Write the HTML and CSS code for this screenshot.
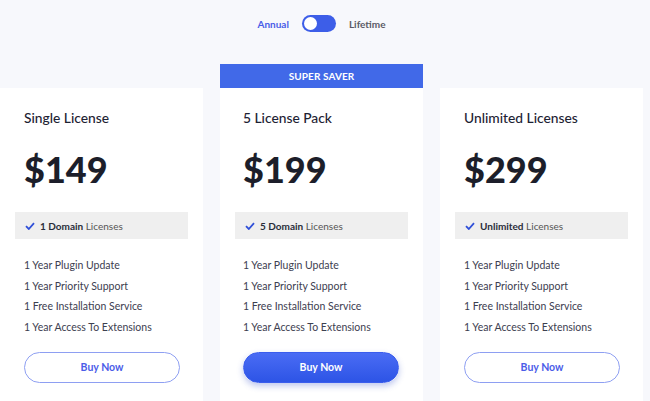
FILE: index.html
```html
<!DOCTYPE html>
<html>
<head>
<meta charset="utf-8">
<link rel="stylesheet" href="styles.css">
</head>
<body>
<div class="page">
  <div class="switcher">
    <span class="sw-label active">Annual</span>
    <span class="toggle"><span class="knob"></span></span>
    <span class="sw-label">Lifetime</span>
  </div>
  <div class="plans">
    <div class="plan">
      <div class="banner-space"></div>
      <div class="card">
        <h2 class="title">Single License</h2>
        <div class="price">$149</div>
        <div class="domains"><svg class="check" viewBox="0 0 10 8" width="10" height="8"><path d="M1 4.2 L3.8 7 L9 1.2" fill="none" stroke="#2f4fd8" stroke-width="1.8"/></svg><b>1 Domain</b>&nbsp;Licenses</div>
        <ul class="features">
          <li>1 Year Plugin Update</li>
          <li>1 Year Priority Support</li>
          <li>1 Free Installation Service</li>
          <li>1 Year Access To Extensions</li>
        </ul>
        <a class="btn">Buy Now</a>
      </div>
    </div>
    <div class="plan">
      <div class="banner">SUPER SAVER</div>
      <div class="card">
        <h2 class="title">5 License Pack</h2>
        <div class="price">$199</div>
        <div class="domains"><svg class="check" viewBox="0 0 10 8" width="10" height="8"><path d="M1 4.2 L3.8 7 L9 1.2" fill="none" stroke="#2f4fd8" stroke-width="1.8"/></svg><b>5 Domain</b>&nbsp;Licenses</div>
        <ul class="features">
          <li>1 Year Plugin Update</li>
          <li>1 Year Priority Support</li>
          <li>1 Free Installation Service</li>
          <li>1 Year Access To Extensions</li>
        </ul>
        <a class="btn primary">Buy Now</a>
      </div>
    </div>
    <div class="plan">
      <div class="banner-space"></div>
      <div class="card">
        <h2 class="title">Unlimited Licenses</h2>
        <div class="price">$299</div>
        <div class="domains"><svg class="check" viewBox="0 0 10 8" width="10" height="8"><path d="M1 4.2 L3.8 7 L9 1.2" fill="none" stroke="#2f4fd8" stroke-width="1.8"/></svg><b>Unlimited</b>&nbsp;Licenses</div>
        <ul class="features">
          <li>1 Year Plugin Update</li>
          <li>1 Year Priority Support</li>
          <li>1 Free Installation Service</li>
          <li>1 Year Access To Extensions</li>
        </ul>
        <a class="btn">Buy Now</a>
      </div>
    </div>
  </div>
</div>
</body>
</html>
```
FILE: styles.css
```css
* { box-sizing: border-box; }
html, body { margin: 0; padding: 0; }
body {
  background: #f7f8fc;
  font-family: "Lato", "Noto Sans", sans-serif;
  color: #1d2030;
  overflow: hidden;
  height: 401px;
}
.page { width: 650px; }
.switcher {
  display: flex;
  align-items: center;
  justify-content: center;
  gap: 13px;
  height: 47px;
  padding-right: 7px;
}
.sw-label {
  font-size: 10px;
  font-weight: 700;
  color: #5a5a66;
}
.sw-label.active { color: #4a5de8; }
.toggle {
  width: 34px;
  height: 17px;
  border-radius: 9px;
  background: #3d5ee8;
  display: flex;
  align-items: center;
  padding-left: 2px;
}
.knob {
  width: 13px;
  height: 13px;
  border-radius: 50%;
  background: #fff;
}
.plans {
  display: flex;
  gap: 17px;
  margin-top: 17px;
}
.plan { width: 203px; display: flex; flex-direction: column; }
.banner-space { height: 24px; }
.banner {
  height: 24px;
  background: #4169e8;
  color: #fff;
  font-size: 10px;
  font-weight: 700;
  display: flex;
  align-items: center;
  justify-content: center;
  letter-spacing: 0.1px;
}
.card {
  background: #fff;
  height: 340px;
  padding: 20px 23px 0 24px;
}
.plan:nth-child(2) .card { padding-left: 23px; }
.title {
  margin: 0;
  font-size: 13.8px;
  font-weight: 500;
  color: #1d2233;
  line-height: 20px;
}
.price {
  margin-top: 17px;
  font-size: 36px;
  font-weight: 900;
  line-height: 48px;
  color: #1c1e2a;
  letter-spacing: 0;
}
.domains {
  margin: 19px -8px 0 -9px;
  height: 27px;
  background: #efefef;
  display: flex;
  align-items: center;
  padding-left: 10px;
  font-size: 10px;
  color: #555;
}
.plan:nth-child(2) .domains { margin-left: -8px; }
.domains b { color: #2a2d3a; font-weight: 700; }
.check { margin-right: 5px; }
.features {
  list-style: none;
  margin: 19px 0 0 0;
  padding: 0;
}
.features li {
  font-size: 10.5px;
  color: #3d4050;
  height: 20.7px;
  line-height: 14px;
}
.btn {
  display: flex;
  align-items: center;
  justify-content: center;
  margin-top: 11px;
  height: 31px;
  width: 156px;
  border-radius: 16px;
  border: 1px solid #8e9ff2;
  color: #4a5de8;
  font-size: 10.5px;
  font-weight: 700;
}
.btn.primary {
  background: linear-gradient(#4a6cf4, #2d54e6);
  border-color: #3a5ded;
  color: #fff;
  box-shadow: 0 3px 6px rgba(40, 70, 200, 0.3);
}
```
